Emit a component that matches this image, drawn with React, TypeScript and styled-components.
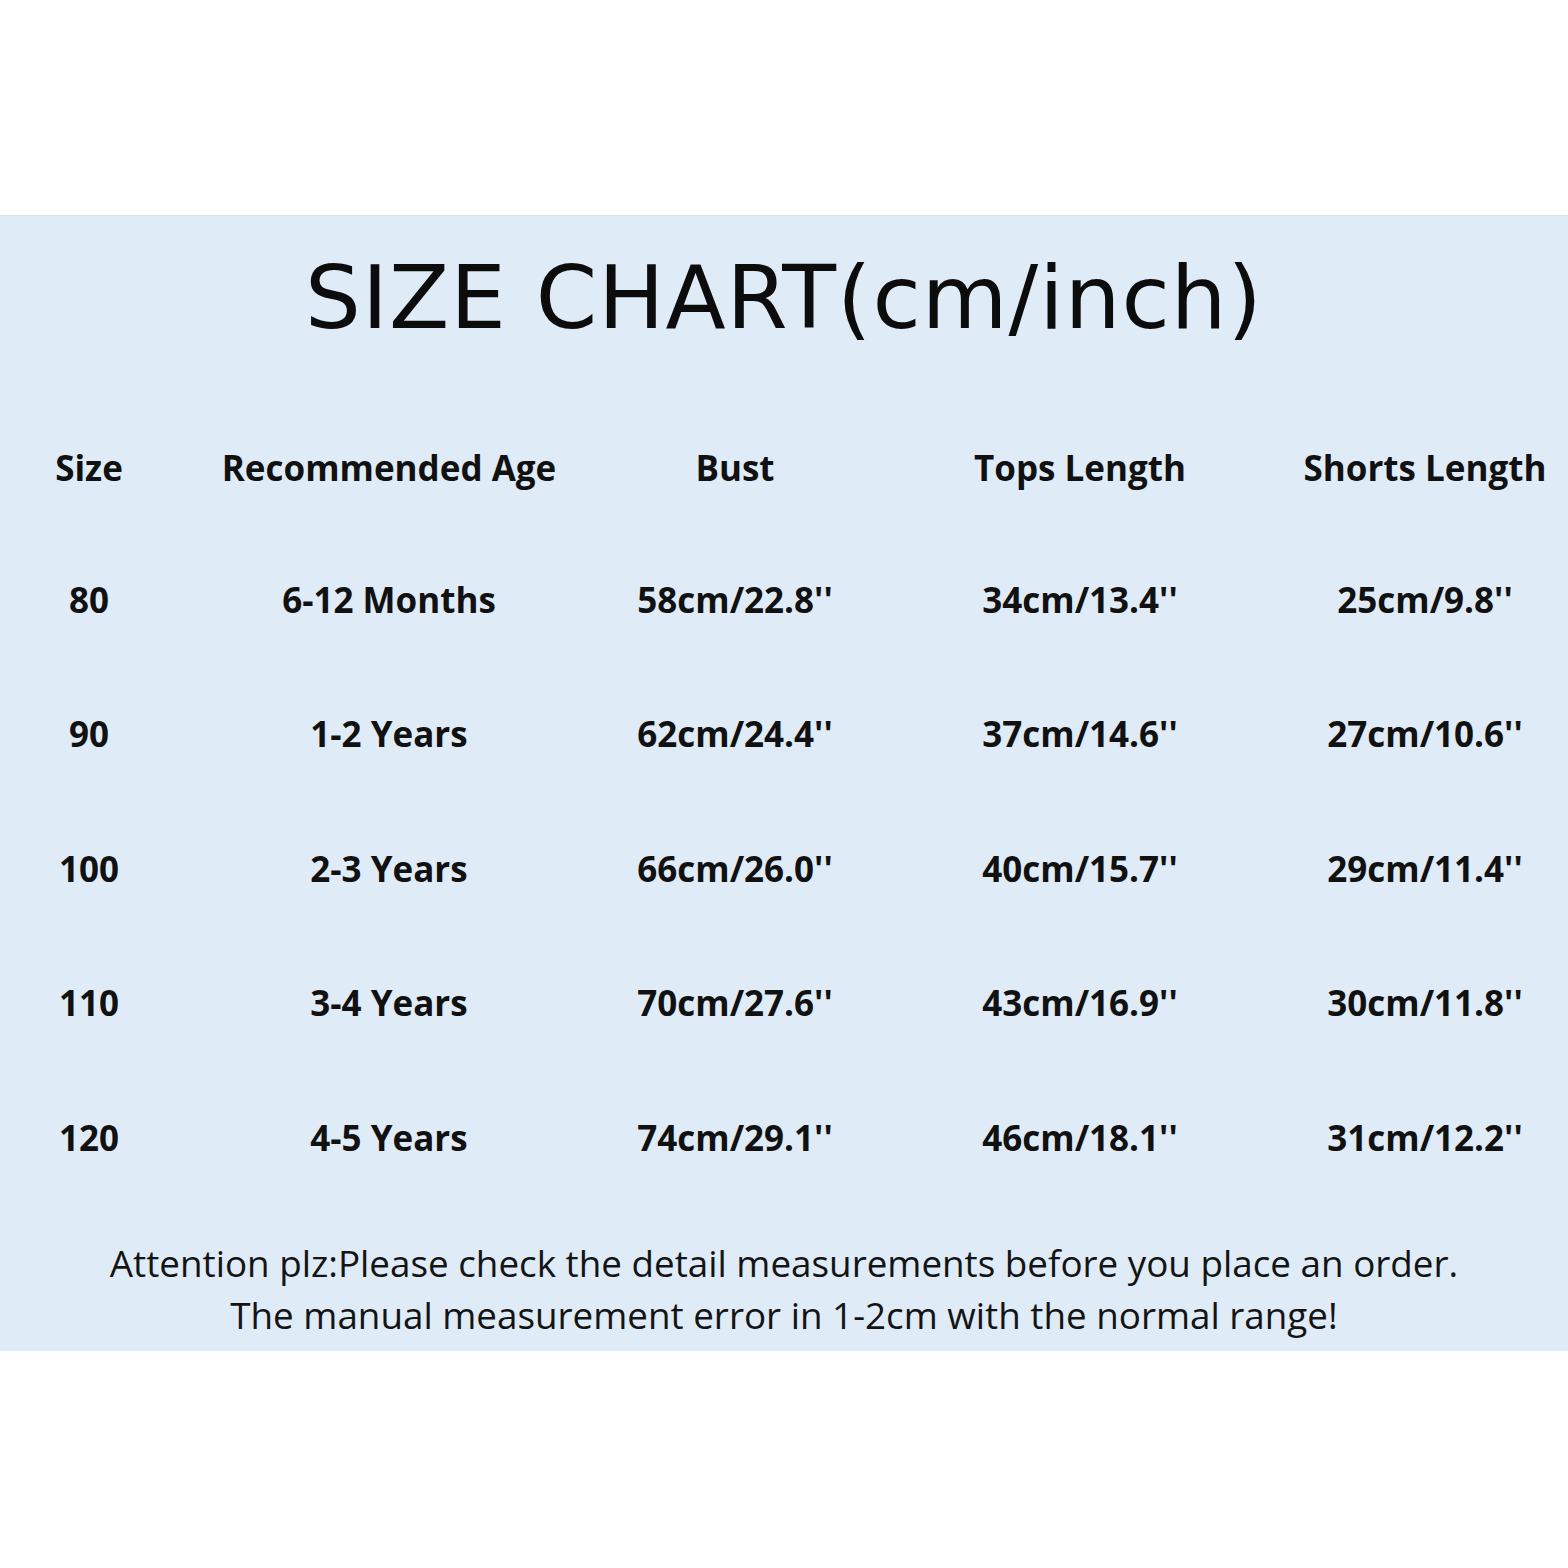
import styled, { createGlobalStyle } from 'styled-components';

const GlobalStyle = createGlobalStyle`
  html, body {
    margin: 0;
    padding: 0;
    background: #ffffff;
  }
`;

const Page = styled.div`
  width: 1568px;
  height: 1568px;
  display: flex;
  flex-direction: column;
  background: #ffffff;
`;

const Spacer = styled.div<{ h: number }>`
  height: ${({ h }) => h}px;
  flex-shrink: 0;
`;

const Panel = styled.section`
  height: 1135px;
  background: #dfebf7;
  border-top: 1px solid #d6e2ec;
  display: flex;
  flex-direction: column;
  align-items: stretch;
  color: #111111;
`;

const Title = styled.h1`
  margin: 0;
  padding-top: 20px;
  height: 124px;
  text-align: center;
  font-family: 'DejaVu Sans', sans-serif;
  font-style: normal;
  font-weight: 400;
  font-size: 88px;
  line-height: 124px;
  letter-spacing: 1px;
  color: #0c0c0c;
`;

const Table = styled.div`
  margin-top: 86px;
  display: grid;
  grid-template-columns: 178px 422px 270px 420px 270px;
  grid-template-rows: 131.5px;
  grid-auto-rows: 134.5px;
  font-family: 'Open Sans', 'Noto Sans', sans-serif;
  font-weight: 700;
  font-size: 35px;
`;

const Cell = styled.div`
  display: flex;
  align-items: flex-start;
  justify-content: center;
  white-space: nowrap;
  line-height: 44px;
`;

const Note = styled.div`
  margin-top: -13px;
  text-align: center;
  font-family: 'Open Sans', 'Noto Sans', sans-serif;
  font-size: 36.8px;
  line-height: 52px;
  color: #141414;
`;

const headers = ['Size', 'Recommended Age', 'Bust', 'Tops Length', 'Shorts Length'];

const rows = [
  ['80', '6-12 Months', "58cm/22.8''", "34cm/13.4''", "25cm/9.8''"],
  ['90', '1-2 Years', "62cm/24.4''", "37cm/14.6''", "27cm/10.6''"],
  ['100', '2-3 Years', "66cm/26.0''", "40cm/15.7''", "29cm/11.4''"],
  ['110', '3-4 Years', "70cm/27.6''", "43cm/16.9''", "30cm/11.8''"],
  ['120', '4-5 Years', "74cm/29.1''", "46cm/18.1''", "31cm/12.2''"],
];

export default function App() {
  return (
    <Page>
      <GlobalStyle />
      <Spacer h={215} />
      <Panel>
        <Title>SIZE CHART(cm/inch)</Title>
        <Table>
          {headers.map((h) => (
            <Cell key={h}>{h}</Cell>
          ))}
          {rows.map((r) =>
            r.map((v, i) => <Cell key={r[0] + i}>{v}</Cell>)
          )}
        </Table>
        <Note>
          Attention plz:Please check the detail measurements before you place an order.
          <br />
          The manual measurement error in 1-2cm with the normal range!
        </Note>
      </Panel>
    </Page>
  );
}
